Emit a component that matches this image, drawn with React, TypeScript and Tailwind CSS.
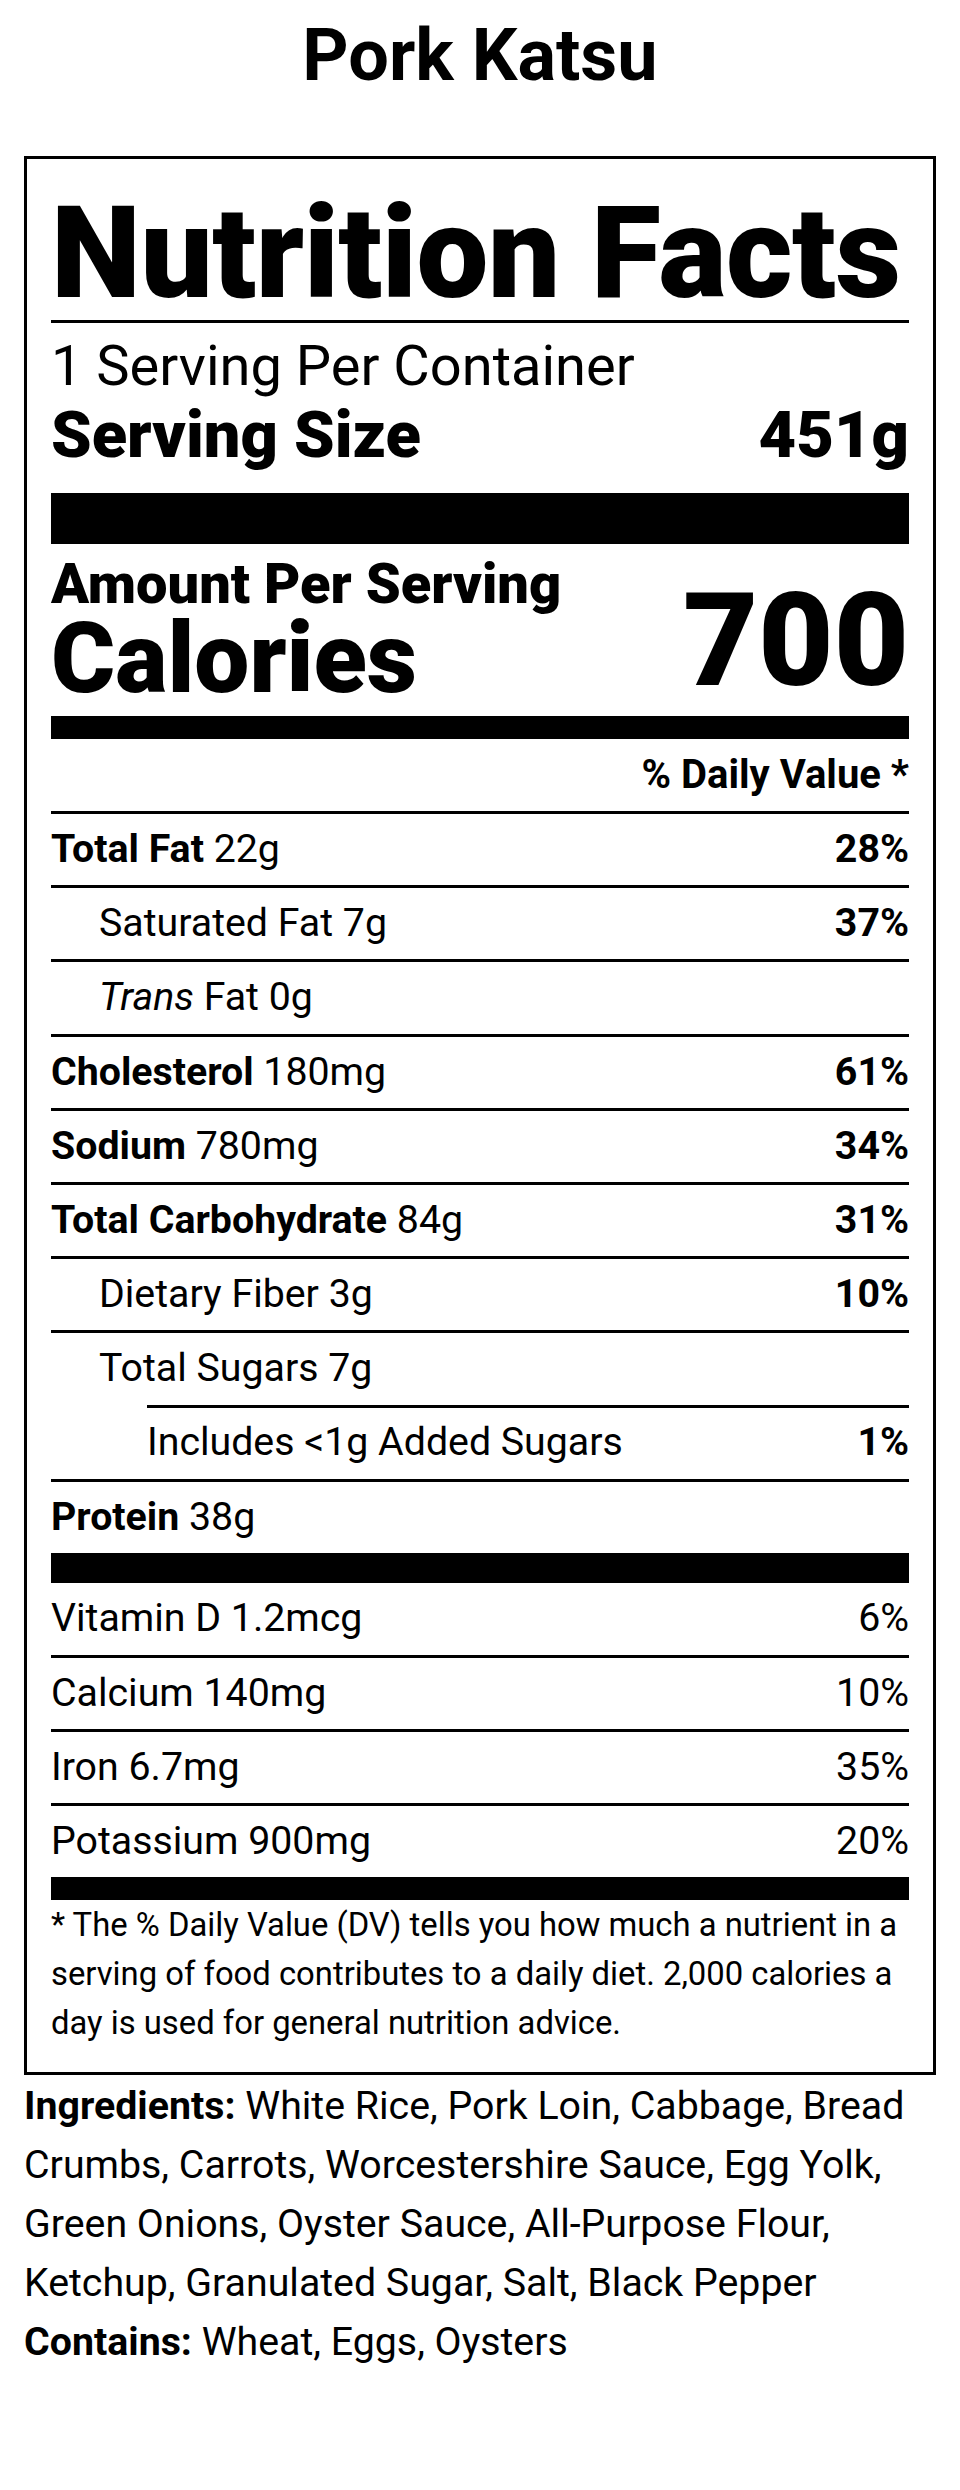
import React from 'react'

type RowProps = {
  children: React.ReactNode
  dv?: string
  indent?: string
  border?: boolean
  lightDv?: boolean
}

const Row = ({ children, dv, indent = '', border = true, lightDv = false }: RowProps) => (
  <div
    className={`flex items-center justify-between text-[39.3px] leading-none ${indent} ${
      border ? 'h-[74.2px] border-t-[3px] border-black' : 'h-[72px]'
    }`}
  >
    <div>{children}</div>
    {dv && <div className={lightDv ? 'font-normal' : 'font-bold'}>{dv}</div>}
  </div>
)

export default function App() {
  return (
    <div className="min-h-screen bg-white pt-5 font-['Roboto',sans-serif] text-black">
      <h1 className="text-center text-[72px] font-bold leading-none">Pork Katsu</h1>

      <section className="mx-6 mt-16 border-[3px] border-black px-6 pt-[30px] pb-6">
        <h2 className="border-b-[3px] border-black pb-[3px] text-[128px] font-black leading-none tracking-[-0.5px]">
          Nutrition Facts
        </h2>

        <div className="mt-2">
          <p className="text-[56px] leading-[71px]">1 Serving Per Container</p>
          <div className="flex justify-between text-[65px] font-black leading-[67px]">
            <span>Serving Size</span>
            <span>451g</span>
          </div>
        </div>

        <div className="mt-6 h-[51px] bg-black" />

        <div className="mt-3 flex items-end justify-between">
          <div className="font-black">
            <p className="text-[56px] leading-[56px]">Amount Per Serving</p>
            <p className="text-[98px] leading-[94px]">Calories</p>
          </div>
          <p className="text-[130px] font-black leading-none">700</p>
        </div>

        <div className="mt-2.5 h-[23px] bg-black" />

        <div className="flex h-[72px] items-center justify-end text-[40px] font-bold leading-none">
          % Daily Value *
        </div>

        <Row dv="28%">
          <b>Total Fat</b> 22g
        </Row>
        <Row dv="37%" indent="pl-12">
          Saturated Fat 7g
        </Row>
        <Row indent="pl-12">
          <i>Trans</i> Fat 0g
        </Row>
        <Row dv="61%">
          <b>Cholesterol</b> 180mg
        </Row>
        <Row dv="34%">
          <b>Sodium</b> 780mg
        </Row>
        <Row dv="31%">
          <b>Total Carbohydrate</b> 84g
        </Row>
        <Row dv="10%" indent="pl-12">
          Dietary Fiber 3g
        </Row>
        <Row indent="pl-12">Total Sugars 7g</Row>
        <Row dv="1%" indent="ml-24">
          Includes &lt;1g Added Sugars
        </Row>
        <Row>
          <b>Protein</b> 38g
        </Row>

        <div className="h-[30px] bg-black" />

        <Row border={false} dv="6%" lightDv>
          Vitamin D 1.2mcg
        </Row>
        <Row dv="10%" lightDv>
          Calcium 140mg
        </Row>
        <Row dv="35%" lightDv>
          Iron 6.7mg
        </Row>
        <Row dv="20%" lightDv>
          Potassium 900mg
        </Row>

        <div className="h-[23px] bg-black" />

        <p className="mt-px text-[32.8px] leading-[49px]">
          * The % Daily Value (DV) tells you how much a nutrient in a serving of food contributes to a daily
          diet. 2,000 calories a day is used for general nutrition advice.
        </p>
      </section>

      <div className="px-6 pt-[2px] text-[39.3px] leading-[59px]">
        <p>
          <b>Ingredients:</b> White Rice, Pork Loin, Cabbage, Bread Crumbs, Carrots, Worcestershire Sauce, Egg
          Yolk, Green Onions, Oyster Sauce, All-Purpose Flour, Ketchup, Granulated Sugar, Salt, Black Pepper
        </p>
        <p>
          <b>Contains:</b> Wheat, Eggs, Oysters
        </p>
      </div>
    </div>
  )
}
